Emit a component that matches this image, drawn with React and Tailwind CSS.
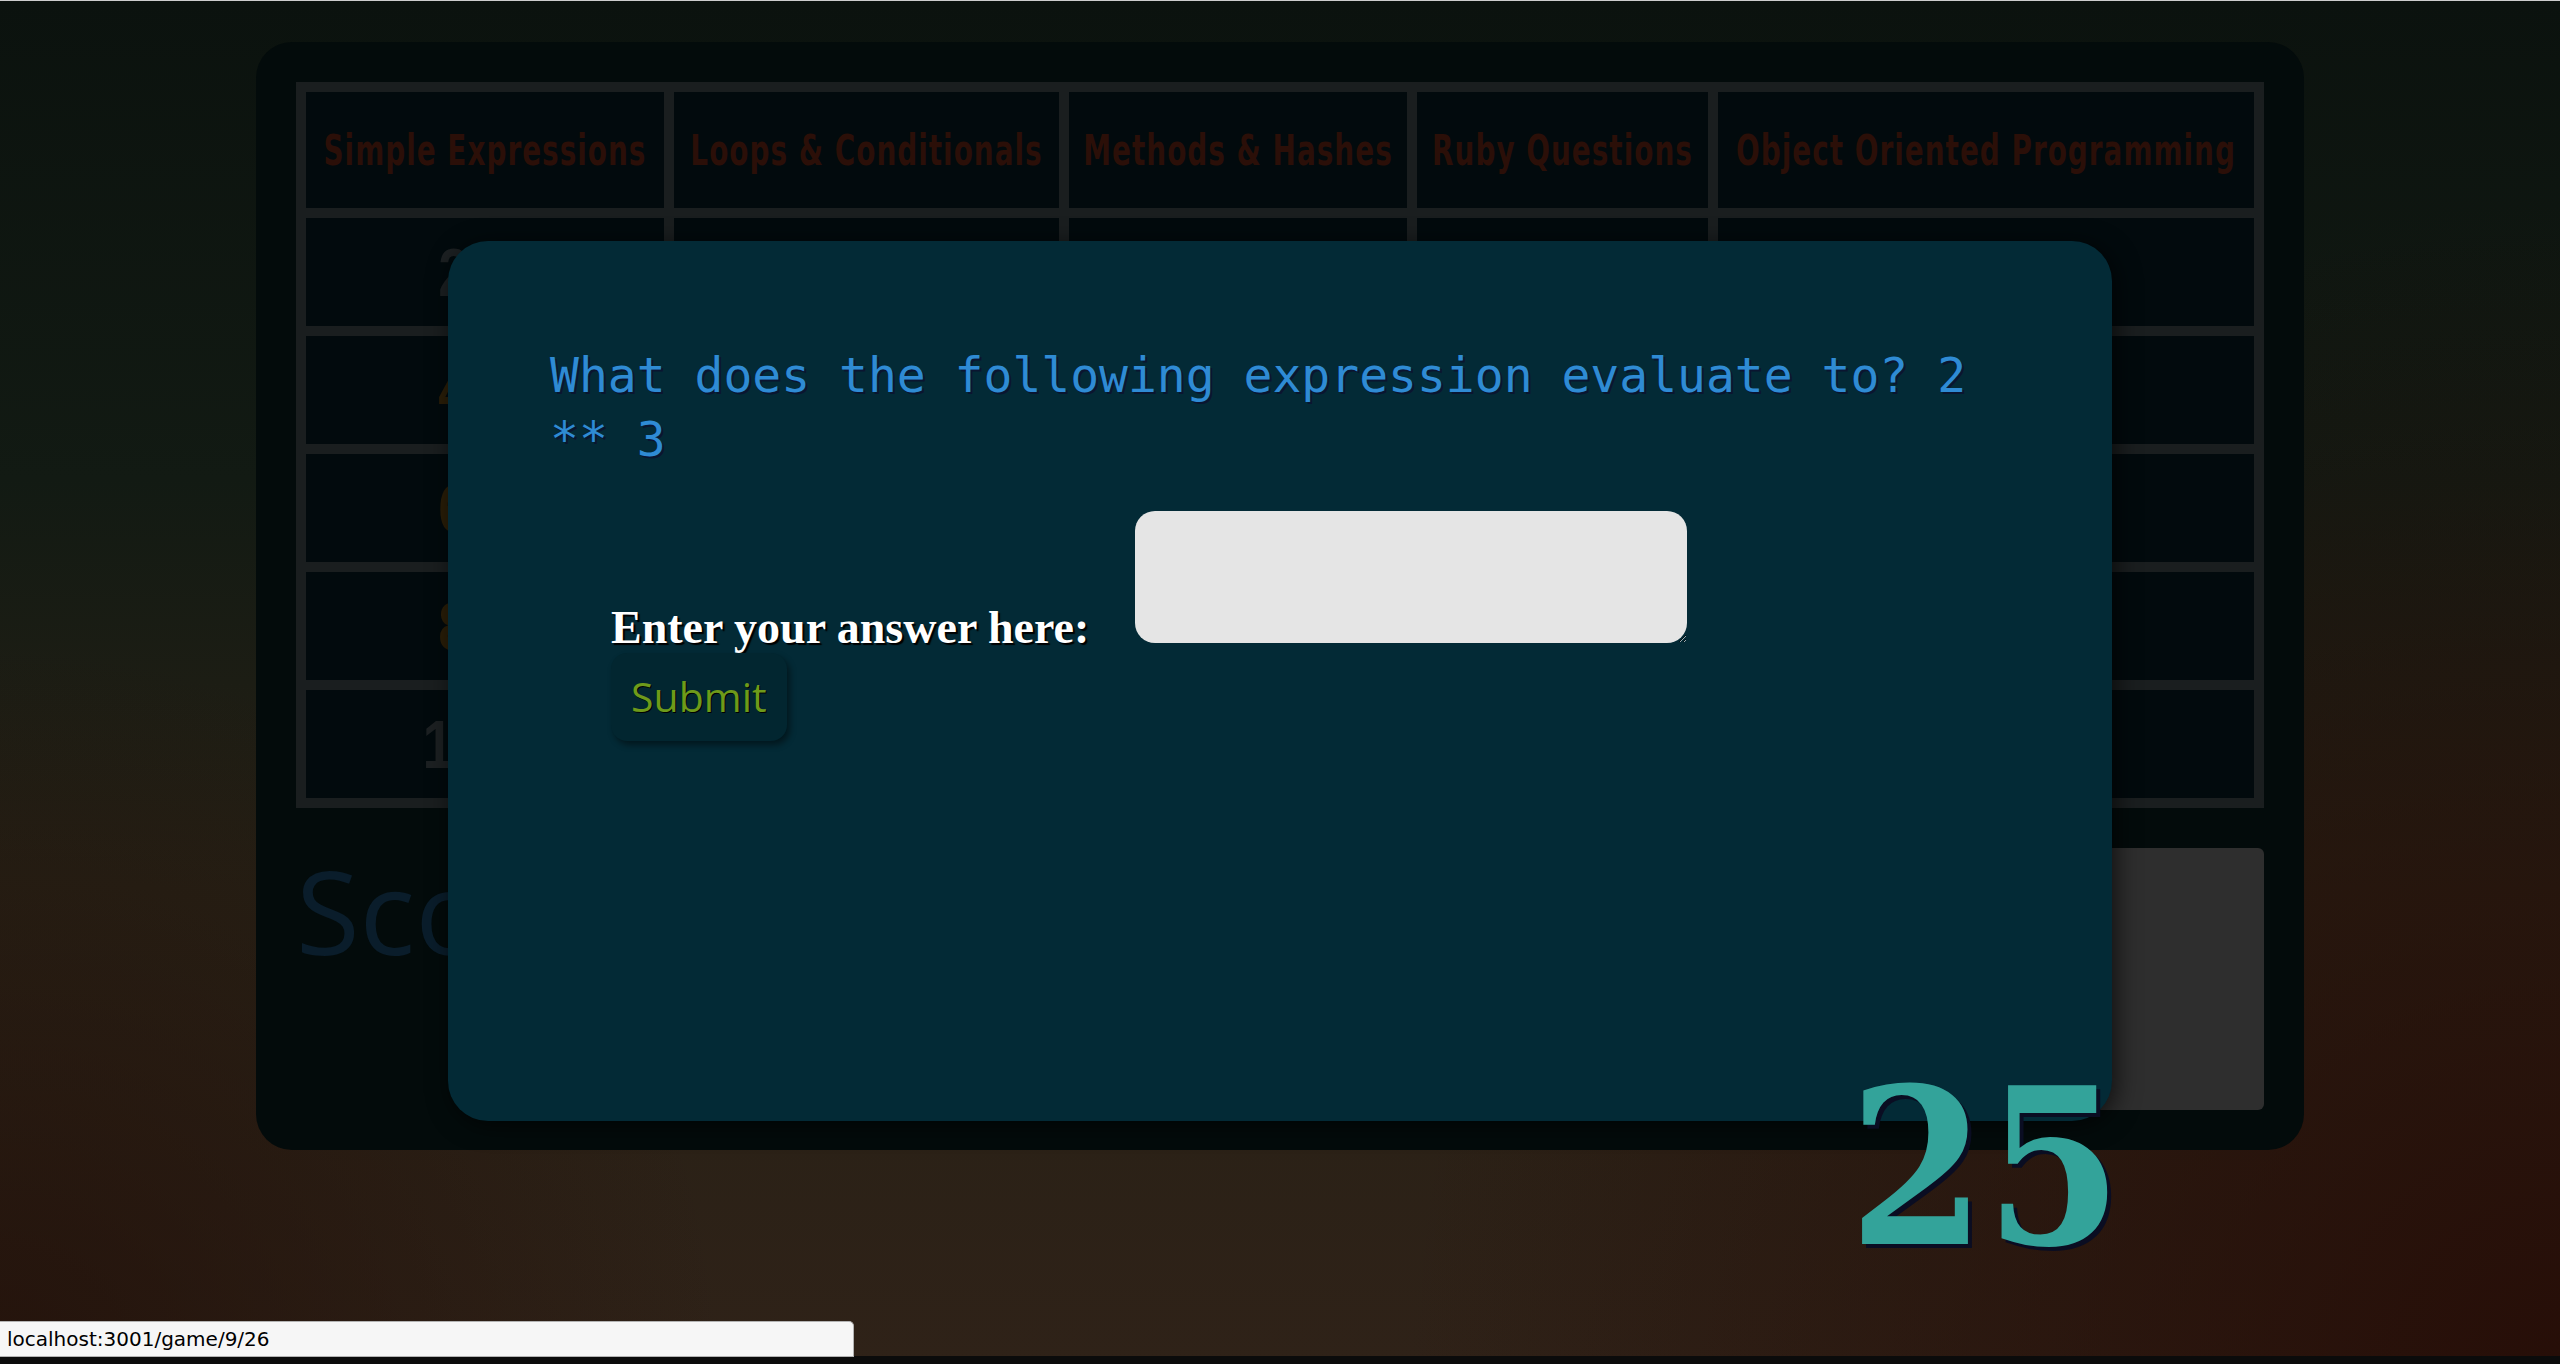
import React from 'react';

const categories = [
  'Simple Expressions',
  'Loops & Conditionals',
  'Methods & Hashes',
  'Ruby Questions',
  'Object Oriented Programming',
];

const values = [200, 400, 600, 800, 1000];

// answered questions show up greyed out
const used = {
  0: [200, 1000],
  1: [200],
  2: [400],
  3: [],
  4: [600],
};

const Board = () => (
  <main className="mx-auto mt-[41px] w-[2048px] rounded-[36px] bg-[#030b0b] p-[40px]">
    {/* Category grid */}
    <div className="grid grid-cols-[358px_385px_338px_291px_536px] gap-[10px] border-[10px] border-[#1a1e1f] bg-[#1a1e1f]">
      {categories.map((cat) => (
        <div key={cat} className="flex h-[116px] items-center justify-center bg-[#020a0d]">
          <span className="inline-block scale-y-[1.4] text-[31px] font-bold leading-none tracking-[1px] text-[#2b0f08] font-stretch-condensed [font-family:'DejaVu_Sans_Condensed','DejaVu_Sans',sans-serif]">
            {cat}
          </span>
        </div>
      ))}
      {values.map((value) =>
        categories.map((cat, col) => (
          <div key={`${cat}-${value}`} className="flex h-[108px] items-center justify-center bg-[#020a0d]">
            <span
              className={
                used[col].includes(value)
                  ? 'inline-block scale-x-[0.82] text-[68px] font-bold leading-none text-[#1c2022] [font-family:"Liberation_Sans",sans-serif]'
                  : 'inline-block scale-x-[0.82] text-[68px] font-bold leading-none text-[#2a1e08] [font-family:"Liberation_Sans",sans-serif]'
              }
            >
              {value}
            </span>
          </div>
        ))
      )}
    </div>

    {/* Score */}
    <div className="mt-[40px] flex items-start justify-between">
      <div className="mt-[4px] text-[116px] leading-none text-[#0a1d2b] [font-family:'Open_Sans',sans-serif]">Score: 0</div>
      <div className="h-[262px] w-[420px] rounded-[6px] bg-[#2e2e2e]" />
    </div>
  </main>
);

const QuestionModal = () => (
  <div className="absolute left-[448px] top-[240px] h-[880px] w-[1664px] rounded-[40px] bg-[#032a36] pl-[102px] pr-[100px] pt-[102px] shadow-[4px_4px_24px_rgba(0,0,0,0.65)]">
    <h2 className="text-[48px] leading-[64px] text-[#2f8bd4] [font-family:'DejaVu_Sans_Mono',monospace] [text-shadow:2px_2px_0_#0a1530]">
      What does the following expression evaluate to? 2 ** 3
    </h2>
    <form className="ml-[61px] mt-[40px] flex flex-col items-start" onSubmit={(e) => e.preventDefault()}>
      <div className="flex items-end">
        <label
          htmlFor="answer"
          className="mb-[-7.5px] text-[46px] font-bold leading-none text-white [font-family:'Liberation_Serif',serif] [text-shadow:2px_2px_1px_#000]"
        >
          Enter your answer here:
        </label>
        <textarea id="answer" className="ml-[46px] h-[132px] w-[552px] rounded-[20px] bg-[#e5e5e5] text-black" />
      </div>
      <button
        type="submit"
        className="mt-[10px] rounded-[16px] bg-[#022630] px-[20px] py-[13px] text-[41px] leading-normal text-[#6e9a1a] shadow-[3px_4px_6px_rgba(0,0,0,0.45)] [font-family:'Open_Sans',sans-serif] [text-shadow:1px_1px_0_#000]"
      >
        Submit
      </button>
    </form>
  </div>
);

export default function App() {
  return (
    <div className="relative flex h-[1364px] w-full flex-col overflow-hidden border-t border-[#cdcdcd] bg-[radial-gradient(circle_at_100%_100%,rgba(38,12,6,0.9)_0%,rgba(38,12,6,0)_40%),radial-gradient(circle_at_0%_100%,rgba(34,16,9,0.8)_0%,rgba(34,16,9,0)_25%),linear-gradient(to_bottom,#0b120e_0%,#121a13_35%,#262015_65%,#2f2218_100%)]">
      <Board />
      <div className="mt-auto h-[8px] bg-[#0b0b0b]" />

      <QuestionModal />

      {/* Countdown */}
      <div className="absolute left-[1849px] top-[1057px] text-[218px] font-bold leading-none text-[#33a39a] font-stretch-condensed [font-family:'DejaVu_Serif_Condensed','DejaVu_Serif',serif] [text-shadow:4px_4px_0_#0a0d22]">
        25
      </div>

      {/* Browser status bar */}
      <div className="absolute left-0 top-[1320px] h-[36px] w-[854px] rounded-tr-[5px] border border-l-0 border-[#b3b3b3] bg-[#f6f6f6] pl-[7px] text-[20px] leading-[34px] text-black [font-family:'DejaVu_Sans',sans-serif]">
        localhost:3001/game/9/26
      </div>
    </div>
  );
}
